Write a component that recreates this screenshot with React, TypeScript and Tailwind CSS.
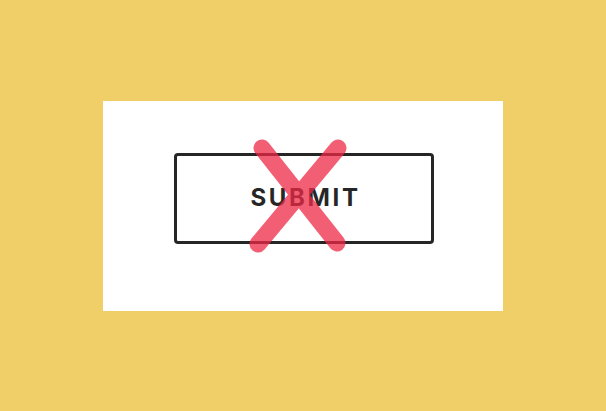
export default function App() {
  return (
    <div className="w-[606px] h-[411px] bg-[#f0ce68] flex items-center justify-center">
      <div className="w-[400px] h-[210px] bg-white flex justify-center pt-[52px] pl-[1px]">
        <div className="relative">
          <button className="w-[260px] h-[91px] border-[3px] border-[#262626] rounded-[4px] flex items-center justify-center pl-[4px] text-[24px] font-bold tracking-[0.11em] text-[#262626] font-['Inter','Liberation_Sans',sans-serif]">
            SUBMIT
          </button>
          <svg className="absolute left-0 top-0 pointer-events-none overflow-visible opacity-75" width="260" height="91" viewBox="0 0 260 91" fill="none">
            <path d="M88 -5 L163 90 M164 -5 L84 91" stroke="#ee2a45" strokeWidth="17" strokeLinecap="round" />
          </svg>
        </div>
      </div>
    </div>
  );
}
